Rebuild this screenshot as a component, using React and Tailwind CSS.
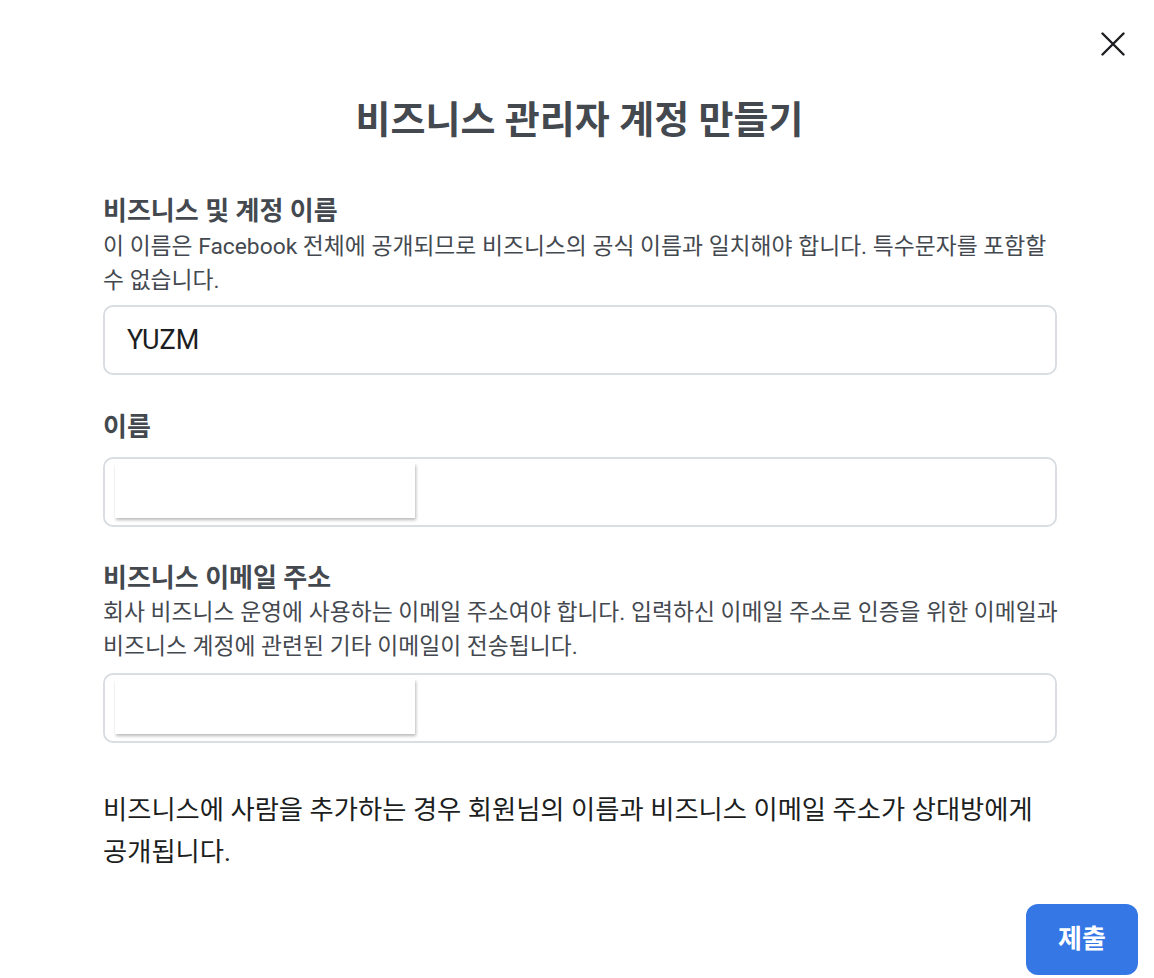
import React from "react";

const FONT = { fontFamily: '"Roboto", "Noto Sans CJK KR", sans-serif' };

function Redact() {
  return (
    <div className="absolute left-[10px] top-[4px] h-[55px] w-[300px] bg-white shadow-[1px_2px_3px_rgba(0,0,0,0.28)]" />
  );
}

export default function App() {
  return (
    <div className="relative min-h-[978px] w-[1154px] bg-white" style={FONT}>
      <button className="absolute right-[29px] top-[32px] flex h-[24px] w-[24px] items-center justify-center text-[#1c1e21]">
        <svg width="24" height="24" viewBox="0 0 24 24" fill="none" stroke="currentColor" strokeWidth="2.4" strokeLinecap="round">
          <path d="M1.5 1.5 L22.5 22.5 M22.5 1.5 L1.5 22.5" />
        </svg>
      </button>

      <div className="pl-[103px] pr-[90px] pt-[96px]">
        <h1 className="mr-[8px] h-[48px] text-center text-[38px] font-bold leading-[48px] text-[#444950]">
          비즈니스 관리자 계정 만들기
        </h1>

        <div className="mt-[49px] text-[26px] font-bold leading-[36px] text-[#444950]">비즈니스 및 계정 이름</div>
        <p className="mt-[1px] whitespace-nowrap text-[22.8px] leading-[34px] text-[#444950]">
          이 이름은 Facebook 전체에 공개되므로 비즈니스의 공식 이름과 일치해야 합니다. 특수문자를 포함할
          <br />수 없습니다.
        </p>
        <div className="mt-[7px] mr-[7px] flex h-[70px] items-center rounded-[10px] border-2 border-[#dadde1] px-[22px] text-[27px] text-[#1c1e21]">
          YUZM
        </div>

        <div className="mt-[35px] text-[26px] font-bold leading-[34px] text-[#444950]">이름</div>
        <div className="relative mt-[13px] mr-[7px] h-[70px] rounded-[10px] border-2 border-[#dadde1]">
          <Redact />
        </div>

        <div className="mt-[34px] text-[26px] font-bold leading-[34px] text-[#444950]">비즈니스 이메일 주소</div>
        <p className="mt-[1px] whitespace-nowrap text-[22.8px] leading-[34px] text-[#444950]">
          회사 비즈니스 운영에 사용하는 이메일 주소여야 합니다. 입력하신 이메일 주소로 인증을 위한 이메일과
          <br />비즈니스 계정에 관련된 기타 이메일이 전송됩니다.
        </p>
        <div className="relative mt-[9px] mr-[7px] h-[70px] rounded-[10px] border-2 border-[#dadde1]">
          <Redact />
        </div>

        <p className="mt-[46px] whitespace-nowrap text-[26.3px] leading-[42px] text-[#1c1e21]">
          비즈니스에 사람을 추가하는 경우 회원님의 이름과 비즈니스 이메일 주소가 상대방에게
          <br />공개됩니다.
        </p>
      </div>

      <div className="mt-[31px] flex justify-end pr-[16px]">
        <button className="h-[71px] w-[112px] rounded-[12px] bg-[#3578e5] text-[26px] font-bold text-white">제출</button>
      </div>
    </div>
  );
}
